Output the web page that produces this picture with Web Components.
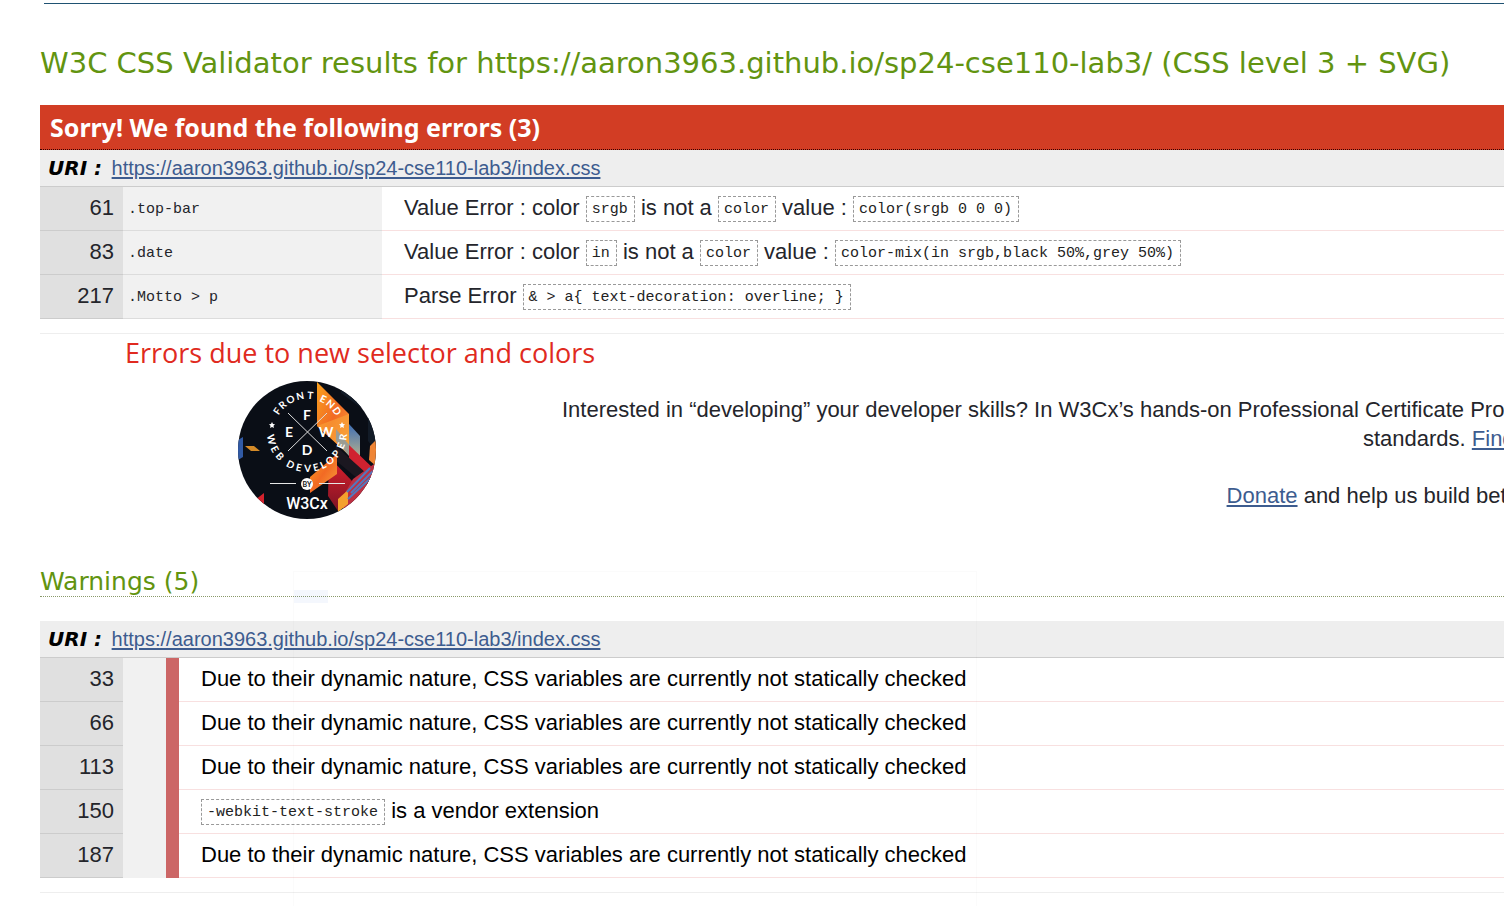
<!DOCTYPE html>
<html lang="en">
<head>
<meta charset="utf-8">
<title>W3C CSS Validator results</title>
<style>
body{margin:0;background:#fff;color:#24252b;font:22px/29px "Liberation Sans",Arial,sans-serif}
</style>
</head>
<body>
<validator-page></validator-page>
<script>
const define=(name,html,init)=>customElements.define(name,class extends HTMLElement{
  constructor(){super();this.attachShadow({mode:'open'}).innerHTML=html;if(init)init(this.shadowRoot,this)}
});

define('code-chip',`<style>
:host{display:inline-block;box-sizing:border-box;height:26px;border:1px dashed #999;padding:0 6px 0 5px;vertical-align:middle}
code{display:block;font:15px/26px "Liberation Mono",monospace;color:#222}
</style><code><slot></slot></code>`);

define('uri-caption',`<style>
:host{display:block;background:#eee;border-bottom:1px solid #ccc;padding:0 8px;height:36px;font-size:20px;line-height:36px;white-space:nowrap}
strong{font:italic bold 20px/36px "DejaVu Sans",Verdana,sans-serif;color:#000;margin-right:4px}
a{color:#3d5c8f;text-decoration:underline;text-underline-offset:2px}
</style><strong>URI :</strong> <a href="https://aaron3963.github.io/sp24-cse110-lab3/index.css">https://aaron3963.github.io/sp24-cse110-lab3/index.css</a>`);

const tableStyle=`
:host{display:block;border-bottom:1px solid #eee;padding-bottom:14px}
table{width:100%;border-collapse:separate;border-spacing:0;table-layout:fixed}
td{box-sizing:border-box;height:44px;padding:0 0 2px;vertical-align:middle;line-height:41px;white-space:nowrap;border-bottom:1px solid #f8e0e0}
td.n{background:#e0e0e0;border-color:#ccc;text-align:right;padding-right:9px}
td.c{background:#f1f1f1;border-color:#dcdcdc}
`;
define('error-table',`<style>${tableStyle}
col.n{width:83px} col.c{width:259px}
td.c{padding:2px 0 0 5px;font:15px/41px "Liberation Mono",monospace}
td.m{padding-left:22px}
</style><table><colgroup><col class="n"><col class="c"><col></colgroup>
<tr><td class="n">61</td><td class="c">.top-bar</td><td class="m">Value Error : color <code-chip>srgb</code-chip> is not a <code-chip>color</code-chip> value : <code-chip>color(srgb 0 0 0)</code-chip></td></tr>
<tr><td class="n">83</td><td class="c">.date</td><td class="m">Value Error : color <code-chip>in</code-chip> is not a <code-chip>color</code-chip> value : <code-chip>color-mix(in srgb,black 50%,grey 50%)</code-chip></td></tr>
<tr><td class="n">217</td><td class="c">.Motto &gt; p</td><td class="m">Parse Error <code-chip>&amp; &gt; a{ text-decoration: overline; }</code-chip></td></tr>
</table>`);

const dyn='Due to their dynamic nature, CSS variables are currently not statically checked';
define('warning-table',`<style>${tableStyle}
col.n{width:83px} col.c{width:56px}
td.c{border-right:13px solid #cc6666;border-bottom-width:0}
td.m{padding-left:22px;color:#000}
</style><table><colgroup><col class="n"><col class="c"><col></colgroup>
${[[33,dyn],[66,dyn],[113,dyn],[150,'<code-chip>-webkit-text-stroke</code-chip> is a vendor extension'],[187,dyn]].map(([n,t])=>`<tr><td class="n">${n}</td><td class="c"></td><td class="m">${t}</td></tr>`).join('')}
</table>`);

define('course-badge',`<style>
:host{display:block;flex:none;width:138px;height:138px}
svg{display:block}
text{font-family:Lato,sans-serif;font-weight:bold;fill:#fff;text-anchor:middle}
</style>
<svg width="138" height="138" viewBox="0 0 138 138" role="img" aria-label="Front End Web Developer by W3Cx">
<defs><clipPath id="disc"><circle cx="69" cy="69" r="69"/></clipPath>
<linearGradient id="fire" x1="0" y1="0" x2="1" y2="1"><stop offset="0" stop-color="#f9a21d"/><stop offset=".5" stop-color="#f26a24"/><stop offset="1" stop-color="#f8a53c"/></linearGradient>
<linearGradient id="steel" x1="0" y1="0" x2="0" y2="1"><stop offset="0" stop-color="#3f6fb5"/><stop offset="1" stop-color="#b8b28c"/></linearGradient>
<linearGradient id="ember" x1="0" y1="0" x2="0" y2="1"><stop offset="0" stop-color="#e0202c"/><stop offset="1" stop-color="#7c1425"/></linearGradient></defs>
<g clip-path="url(#disc)">
<rect width="138" height="138" fill="#0a0e16"/>
<path d="M103 0h35v70l-8-10v-28l-27-20z" fill="#121b27"/>
<path d="M79 1l32 32v41L79 45z" fill="url(#fire)"/>
<path d="M79 45l32-12v41z" fill="#f9a93b" opacity=".55"/>
<path d="M111 43l11 12v22l-11-10z" fill="url(#steel)"/>
<path d="M98 48l24 29-11-2-13-15z" fill="#9c9d93"/>
<path d="M111 64l27 26v13l-27-21z" fill="#d02230"/>
<path d="M98 65l40 36v12L96 78z" fill="#1b1720"/>
<path d="M91 76l24 25v14l-15 15-10-15z" fill="url(#ember)"/>
<path d="M72 96l27-23v20L72 112z" fill="url(#fire)"/>
<path d="M132 65l6-6v26l-7-6z" fill="#ef8535"/>
<path d="M115 98l21-15 2 28-29 18-9-5z" fill="#bd3042"/>
<path d="M100 118l10-9v14l-10 8z" fill="#f4a02d"/>
<path d="M109 111l23-24M113 112l22-22M110 118l27-25" stroke="#5278bd" stroke-width="2"/>
<path d="M0 59l5-3v20l-5 3z" fill="#315aa5"/><path d="M7 65h9l6 5h-9z" fill="#d48a28"/>
<path d="M17 119l9-7v17z" fill="#d5222d"/>
</g>
<path d="M50 32l39 38M89 32L50 70" stroke="#ddd" stroke-width="1"/>
<path d="M32 102.5h26M81 102.5h26" stroke="#e6e6e6" stroke-width="1.2"/>
<circle cx="69" cy="103" r="6" fill="#fff"/>
<text x="69" y="106" style="font-size:7px;fill:#111">BY</text>
<g font-size="14"><text x="69" y="39">F</text><text x="51" y="56">E</text><text x="88" y="56">W</text><text x="69" y="74">D</text></g>
<text x="69" y="128" style="font-family:Roboto,sans-serif;font-weight:500;font-size:16px">W3Cx</text>
<g id="ring" font-size="10"></g>
<g fill="#fff"><path id="star" d="M34 41l1 2 2 .3-1.500 1.500.4 2.200-1.900-1-1.900 1 .4-2.200-1.500-1.500 2-.3z"/><use href="#star" x="70"/></g>
</svg>`,root=>{
  const ring=root.getElementById('ring');
  const put=(letters,angles,radius,flip)=>[...letters].forEach((ch,i)=>{
    const a=angles[i]*Math.PI/180,t=document.createElementNS('http://www.w3.org/2000/svg','text');
    const x=(69+radius*Math.sin(a)).toFixed(1),y=(51-radius*Math.cos(a)).toFixed(1);
    t.setAttribute('transform',`translate(${x} ${y}) rotate(${angles[i]+flip})`);
    t.textContent=ch;ring.append(t);
  });
  put('FRONT',[-55,-42,-27,-11,5],33,0);
  put('END',[26,40,55],33,0);
  put('WEBDEVELOPER',[258,242,228,207,193,179,166,154,141,127,112,98],40,180);
});

define('course-promo',`<style>
:host{display:flex;gap:186px;padding:47px 0 30px 198px}
.copy{flex:none;width:max-content;text-align:center;white-space:nowrap;padding-top:14px}
p{margin:0 0 28px}
a{color:#3d5c8f;text-decoration:underline;text-underline-offset:2px}
</style><course-badge></course-badge><div class="copy">
<p>Interested in “developing” your developer skills? In W3Cx’s hands-on Professional Certificate Program, learn how to code the right way by creating Web sites and apps that use the latest Web<br>standards. <a href="#more">Find out more!</a></p>
<p><a href="#donate">Donate</a> and help us build better tools for a better web.</p></div>`);

define('margin-note',`<style>
:host{position:absolute;left:85px;top:4px;font:27px/30px "Open Sans",sans-serif;color:#e02a20;white-space:nowrap}
</style><slot></slot>`);

define('validator-page',`<style>
:host{display:block;overflow:hidden;padding:3px 0 13px 40px}
header{border-top:1px solid #1f5272;margin-left:4px;height:37px}
h2,h3{margin:0;font-weight:normal;white-space:nowrap}
h2,h3.w{font-family:"DejaVu Sans",Verdana,sans-serif;color:#629410}
h2{font-size:29px;line-height:44px;margin-bottom:20px}
h3.e{font:bold 25px/44px "Noto Sans",sans-serif;color:#fff;background:#d23d24;border-bottom:1px dotted #300;padding-left:10px}
h3.w{font-size:25px;line-height:28px;border-bottom:1px dotted #8a9a6a;margin-bottom:24px}
.promo,.warnings{position:relative}
.fade{position:absolute;left:253px;top:3px;bottom:-14px;width:684px;box-sizing:border-box;border:1px solid rgba(0,0,0,.015);pointer-events:none}
.fade::before{content:"";position:absolute;left:0;top:18px;width:34px;height:13px;background:rgba(60,120,220,.06)}
</style>
<header></header>
<h2>W3C CSS Validator results for https://aaron3963.github.io/sp24-cse110-lab3/ (CSS level 3 + SVG)</h2>
<h3 class="e">Sorry! We found the following errors (3)</h3>
<uri-caption></uri-caption>
<error-table></error-table>
<div class="promo"><margin-note>Errors due to new selector and colors</margin-note><course-promo></course-promo></div>
<div class="warnings">
<h3 class="w">Warnings (5)</h3>
<uri-caption></uri-caption>
<warning-table></warning-table>
<div class="fade"></div>
</div>`);
</script>
</body>
</html>
